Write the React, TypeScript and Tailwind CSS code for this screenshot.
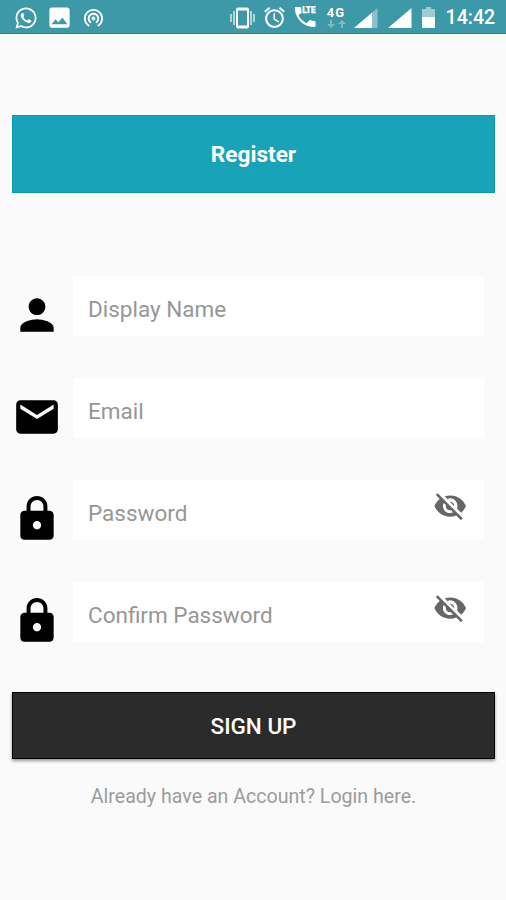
import type { ReactNode } from "react";
import { FaWhatsapp } from "react-icons/fa";
import { MdPerson, MdEmail, MdLock, MdImage, MdAlarm, MdWifiTethering } from "react-icons/md";

function VibrateIcon() {
  return (
    <svg width="25" height="22" viewBox="0 0 25 22" className="shrink-0 fill-white">
      <path d="M0 7h2v8H0zM3 4h2v14H3zM20 4h2v14h-2zM23 7h2v8h-2z" opacity="0.6" />
      <path fillRule="evenodd" d="M8 .5h9a2 2 0 0 1 2 2v17a2 2 0 0 1-2 2H8a2 2 0 0 1-2-2v-17a2 2 0 0 1 2-2zM8 3.500v15h9v-15z" />
    </svg>
  );
}

function LteCallIcon() {
  return (
    <svg width="22" height="22" viewBox="0 0 22 22" className="shrink-0 fill-white">
      <path d="M4.500 9.300c1.700 3.400 4.600 6.200 8 8l2.700-2.700c.3-.3.8-.4 1.200-.3 1.300.4 2.700.6 4 .6.6 0 1.100.5 1.100 1.100V20c0 .6-.5 1-1.100 1C9.500 21 .9 12.400.9 2c0-.6.5-1.100 1.100-1.100h4c.6 0 1.100.5 1.100 1.100 0 1.400.2 2.700.6 4 .1.4 0 .8-.3 1.100z" />
      <text x="8.200" y="7.300" className="stroke-white stroke-[0.3]" fontFamily="Roboto, sans-serif" fontSize="8.500" fontWeight="900" textLength="13.500" lengthAdjust="spacingAndGlyphs">LTE</text>
    </svg>
  );
}

function Signal({ partial = false }: { partial?: boolean }) {
  return (
    <svg width="24" height="20" viewBox="0 0 24 20" className="shrink-0 fill-white">
      <path d="M0 20L23.500 0v20z" opacity={partial ? 0.4 : 1} />
      {partial && <path d="M0 20L18 4.700V20z" />}
    </svg>
  );
}

function HiddenEyeIcon() {
  return (
    <svg width="34" height="34" viewBox="0 0 24 24" className="mr-px mb-[8px] shrink-0 fill-[#666666]">
      <path d="M12 6.500c2.760 0 5.300 2.500 5.300 5.500 0 .65-.13 1.260-.36 1.830l2.920 2.920c1.510-1.260 2.700-2.890 3.430-4.750-1.730-4.390-6-7.500-11-7.500-1.400 0-2.740.25-3.980.7l2.160 2.160C10.740 6.630 11.350 6.500 12 6.500zM2 4.270l2.280 2.280.46.46C3.080 8.300 1.780 10.020 1 12c1.730 4.390 6 7.500 11 7.500 1.550 0 3.030-.3 4.380-.84l.42.42L19.730 22 21 20.730 3.270 3 2 4.270zM7.530 9.800l1.550 1.550c-.05.21-.08.43-.08.65 0 1.660 1.340 3 3 3 .22 0 .44-.03.65-.08l1.550 1.550c-.67.33-1.410.53-2.200.53-2.760 0-5-2.240-5-5 0-.79.2-1.530.53-2.200zm4.310-.78l3.150 3.150.02-.16c0-1.660-1.340-3-3-3l-.17.01z" />
    </svg>
  );
}

function StatusBar() {
  return (
    <header className="flex h-[34px] shrink-0 items-center border-b border-[#1d8599] bg-[#3d98a8] pt-[2px] text-white">
      <FaWhatsapp className="ml-[14px] size-6 shrink-0" />
      <MdImage className="ml-[8px] size-[27px] shrink-0" />
      <MdWifiTethering className="ml-[9px] size-[23px] shrink-0" />
      <div className="ml-[125px]"><VibrateIcon /></div>
      <MdAlarm className="ml-[7px] size-[25px] shrink-0" />
      <div className="mb-px ml-[7px]"><LteCallIcon /></div>
      <div className="ml-[10px] flex w-[20px] flex-col items-center">
        <span className="text-[13px] leading-[12px] font-bold tracking-[1px]">4G</span>
        <svg width="19" height="8" viewBox="0 0 19 8" className="mt-px fill-white/35">
          <path d="M3 0h2v4h3L4 8 0 4h3zM14 8h2V4h3l-4-4-4 4h3z" />
        </svg>
      </div>
      <div className="ml-[8px]"><Signal partial /></div>
      <div className="ml-[10px]"><Signal /></div>
      <svg width="13" height="21" viewBox="0 0 13 21" className="ml-[10px] shrink-0 fill-white">
        <path d="M4 0h5v2h3a1 1 0 0 1 1 1v7H0V3a1 1 0 0 1 1-1h3z" opacity="0.5" />
        <path d="M0 10h13v10a1 1 0 0 1-1 1H1a1 1 0 0 1-1-1z" />
      </svg>
      <span className="mt-px ml-[10.5px] text-[19.6px] leading-none font-medium">14:42</span>
    </header>
  );
}

function Field({ icon, label, secret = false }: { icon: ReactNode; label: string; secret?: boolean }) {
  return (
    <div className="flex h-[60px] w-[472px]">
      <div className="mt-[14px] size-[50px] shrink-0 text-black">{icon}</div>
      <div className="ml-[11px] flex h-[60px] flex-1 items-center justify-between bg-white pr-[16px] pl-[15px]">
        <span className="mt-[6px] text-[22.5px] leading-[28px] text-[#969696]">{label}</span>
        {secret && <HiddenEyeIcon />}
      </div>
    </div>
  );
}

export default function App() {
  return (
    <div className="flex h-[900px] w-[506px] flex-col overflow-hidden bg-[#fafafa] font-['Roboto',sans-serif]">
      <StatusBar />
      <main className="flex flex-col pr-[11px] pl-[12px]">
        <h1 className="mt-[81px] flex h-[78px] items-center justify-center border border-[#0a9bb1] bg-[#19a3b9] pt-[2px] text-[22.6px] font-bold text-white">
          Register
        </h1>
        <form className="mt-[83px] flex flex-col gap-[42px]">
          <Field label="Display Name" icon={<MdPerson size={50} />} />
          <Field label="Email" icon={<MdEmail size={50} />} />
          <Field label="Password" icon={<MdLock size={50} />} secret />
          <Field label="Confirm Password" icon={<MdLock size={50} />} secret />
        </form>
        <button className="mt-[50px] h-[67px] border border-black bg-[#2b2b2b] pt-[2px] text-[22.5px] font-medium text-white shadow-[0_2px_3px_rgba(0,0,0,0.4)]">
          SIGN UP
        </button>
        <p className="mt-[24px] text-center text-[19.6px] leading-[28px] text-[#9c9c9c]">Already have an Account? Login here.</p>
      </main>
    </div>
  );
}
